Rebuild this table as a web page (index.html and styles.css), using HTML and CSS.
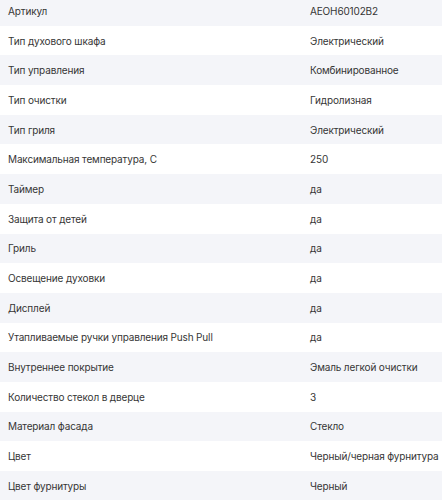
FILE: index.html
```html
<!DOCTYPE html>
<html lang="ru">
<head>
<meta charset="utf-8">
<link rel="stylesheet" href="styles.css">
</head>
<body>
<table class="specs">
<colgroup><col class="name-col"><col></colgroup>
<tbody>
<tr><td>Артикул</td><td>AEOH60102B2</td></tr>
<tr><td>Тип духового шкафа</td><td>Электрический</td></tr>
<tr><td>Тип управления</td><td>Комбинированное</td></tr>
<tr><td>Тип очистки</td><td>Гидролизная</td></tr>
<tr><td>Тип гриля</td><td>Электрический</td></tr>
<tr><td>Максимальная температура, С</td><td>250</td></tr>
<tr><td>Таймер</td><td>да</td></tr>
<tr><td>Защита от детей</td><td>да</td></tr>
<tr><td>Гриль</td><td>да</td></tr>
<tr><td>Освещение духовки</td><td>да</td></tr>
<tr><td>Дисплей</td><td>да</td></tr>
<tr><td>Утапливаемые ручки управления Push Pull</td><td>да</td></tr>
<tr><td>Внутреннее покрытие</td><td>Эмаль легкой очистки</td></tr>
<tr><td>Количество стекол в дверце</td><td>3</td></tr>
<tr><td>Материал фасада</td><td>Стекло</td></tr>
<tr><td>Цвет</td><td>Черный/черная фурнитура</td></tr>
<tr><td>Цвет фурнитуры</td><td>Черный</td></tr>
</tbody>
</table>
</body>
</html>
```

FILE: styles.css
```css
html, body {
  margin: 0;
  padding: 0;
  background: #fff;
}
body {
  font-family: Inter, "Noto Sans", sans-serif;
  font-size: 10px;
  letter-spacing: -0.15px;
  color: #363636;
}
.specs {
  width: 100%;
  table-layout: fixed;
  border-collapse: collapse;
  margin-top: -4px;
}
.name-col {
  width: 302px;
}
.specs td {
  height: 29.7px;
  padding: 0 8px;
  box-sizing: border-box;
  vertical-align: middle;
  white-space: nowrap;
  overflow: visible;
}
.specs tr:nth-child(odd) {
  background: #f4f5f9;
}
```
